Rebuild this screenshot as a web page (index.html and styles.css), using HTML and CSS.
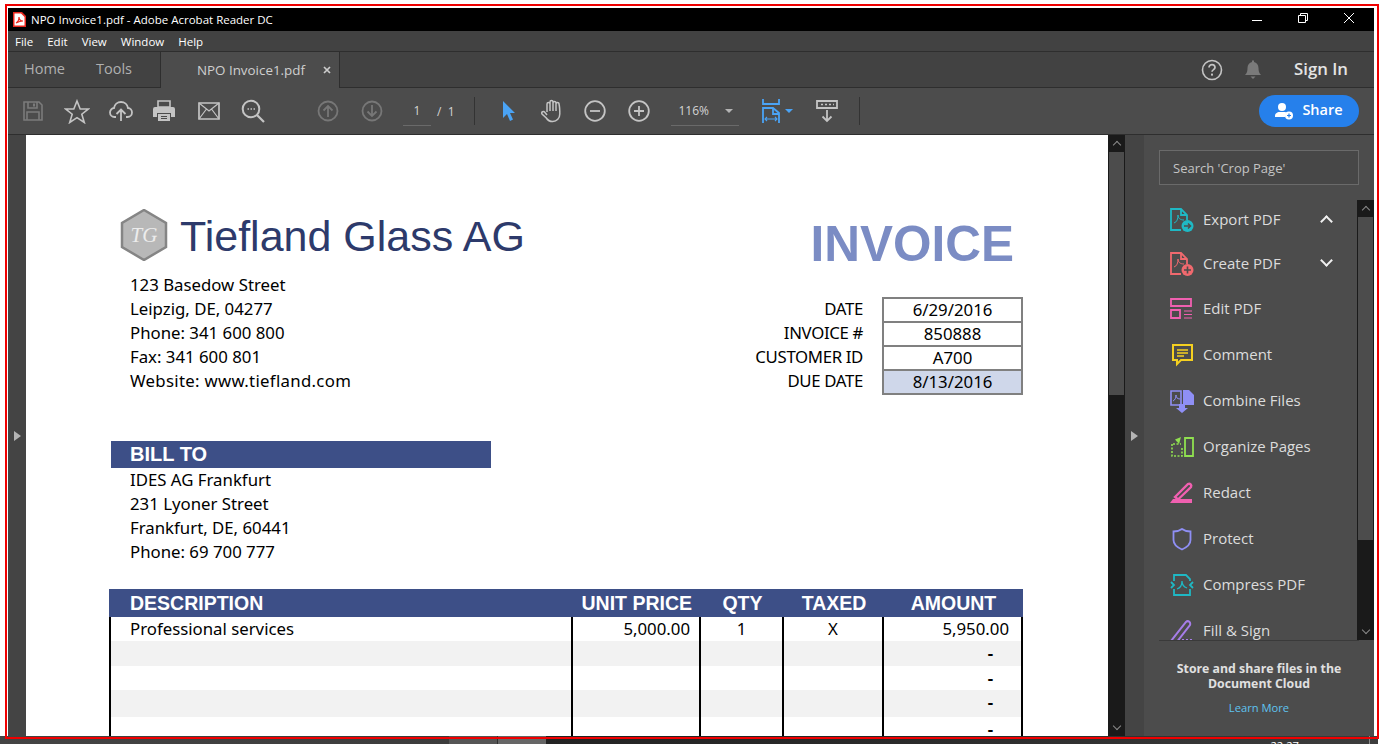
FILE: index.html
```html
<!DOCTYPE html>
<html lang="en">
<head>
    <meta charset="UTF-8">
    <meta name="viewport" content="width=device-width, initial-scale=1.0">
    <title>NPO Invoice1.pdf - Adobe Acrobat Reader DC</title>
    <link rel="stylesheet" href="styles.css">
</head>
<body>
    <div class="screen">
        <div class="app">
            <div class="titlebar">
                <svg class="pdf-icon" width="14" height="15" viewBox="0 0 14 15"><path d="M1 0h9l4 4v11H1z" fill="#e8281e"/><path d="M2.500 1.500h6.500l3.500 3.500v8.500h-10z" fill="#fff"/><path d="M4 11c2-1 3-3 3-6 0 3 1 4 4 4-3 0-5 1-7 2z" fill="none" stroke="#e8281e" stroke-width="1.200"/></svg>
                <span class="title-text">NPO Invoice1.pdf - Adobe Acrobat Reader DC</span>
                <div class="win-btns">
                    <svg width="12" height="12" viewBox="0 0 12 12"><path d="M1 8.500h10" stroke="#fff"/></svg>
                    <svg width="12" height="12" viewBox="0 0 12 12"><path d="M1.500 3.500h7v7h-7zM3.500 3.500v-2h7v7h-2" fill="none" stroke="#fff"/></svg>
                    <svg width="12" height="12" viewBox="0 0 12 12"><path d="M1 1l10 10M11 1L1 11" stroke="#fff"/></svg>
                </div>
            </div>
            <div class="menubar">
                <span>File</span><span>Edit</span><span>View</span><span>Window</span><span>Help</span>
            </div>
            <div class="tabbar">
                <span class="tab-link tab-home">Home</span>
                <span class="tab-link tab-tools">Tools</span>
                <div class="doc-tab">
                    <span>NPO Invoice1.pdf</span>
                    <svg width="8" height="8" viewBox="0 0 8 8"><path d="M1 1l6 6M7 1L1 7" stroke="#ccc" stroke-width="1.700"/></svg>
                </div>
                <div class="tab-right">
                    <svg width="22" height="22" viewBox="0 0 22 22"><circle cx="11" cy="11" r="9.500" fill="none" stroke="#c4c4c4" stroke-width="1.600"/><path d="M8 8.600c0-4 6-4 6 0 0 2-3 2-3 4.200" fill="none" stroke="#c4c4c4" stroke-width="1.700"/><rect x="10" y="14.600" width="2" height="2" fill="#c4c4c4"/></svg>
                    <svg class="bell" width="18" height="21" viewBox="0 0 18 21"><path d="M1 16c2-2 2.500-4 2.500-7S5.500 3.500 8 3V1.500h2V3c2.500.5 4.500 3 4.500 6s.5 5 2.500 7z" fill="#7a7a7a"/><path d="M6.500 17.500h5L9 20z" fill="#7a7a7a"/></svg>
                    <span class="sign-in">Sign In</span>
                </div>
            </div>
            <div class="toolbar">
                <svg class="tb tb-save" width="22" height="22" viewBox="0 0 22 22"><path d="M2 2h15l3 3v15H2z" fill="none" stroke="#7b7b7b" stroke-width="1.600"/><path d="M6 2v6h9V2M5 20v-8h12v8" fill="none" stroke="#7b7b7b" stroke-width="1.600"/><rect x="11" y="3.500" width="2" height="3" fill="#7b7b7b"/></svg>
                <svg class="tb tb-star" width="26" height="25" viewBox="0 0 26 25"><path d="M13 2l3.200 8h8.300l-6.700 5.200 2.500 8.300L13 18.600 5.700 23.500l2.500-8.300L1.500 10h8.300z" fill="none" stroke="#c4c4c4" stroke-width="1.600"/></svg>
                <svg class="tb tb-cloud" width="24" height="22" viewBox="0 0 24 22"><path d="M7 17H5.500C3 17 1 15 1 12.500S3 8 5 8c.5-3.500 3.500-6 7-6s6.500 2.500 7 6c2.200 0 4 2 4 4.500S21 17 18.500 17H17" fill="none" stroke="#c4c4c4" stroke-width="1.800"/><path d="M12 21V10M7.500 14L12 9.500l4.500 4.500" fill="none" stroke="#c4c4c4" stroke-width="1.800"/></svg>
                <svg class="tb tb-print" width="22" height="22" viewBox="0 0 22 22"><path d="M5 1h12v6H5z" fill="none" stroke="#c4c4c4" stroke-width="1.600"/><path d="M2 7h18a2 2 0 0 1 2 2v8h-4v-4H4v4H0V9a2 2 0 0 1 2-2z" fill="#c4c4c4"/><path d="M5 14h12v7H5z" fill="#c4c4c4"/><path d="M8 16.500h6M8 18.500h6" stroke="#4c4c4c"/></svg>
                <svg class="tb tb-mail" width="22" height="18" viewBox="0 0 22 18"><path d="M1 1h20v16H1z" fill="none" stroke="#c4c4c4" stroke-width="1.700"/><path d="M1 1l10 8 10-8M1 17l7.500-10M21 17L13.500 7" fill="none" stroke="#c4c4c4" stroke-width="1.200"/></svg>
                <svg class="tb tb-find" width="24" height="24" viewBox="0 0 24 24"><circle cx="10" cy="10" r="8.300" fill="none" stroke="#c4c4c4" stroke-width="2"/><path d="M16 16l7 7" stroke="#c4c4c4" stroke-width="2.200"/><path d="M6.500 10h1.500M9.500 10h1.500M12.500 10H14" stroke="#c4c4c4" stroke-width="1.500"/></svg>
                <svg class="tb tb-up" width="22" height="22" viewBox="0 0 22 22"><circle cx="11" cy="11" r="9.500" fill="none" stroke="#777" stroke-width="1.800"/><path d="M11 17V6M6.500 10.500L11 6l4.500 4.500" fill="none" stroke="#777" stroke-width="1.800"/></svg>
                <svg class="tb tb-down" width="22" height="22" viewBox="0 0 22 22"><circle cx="11" cy="11" r="9.500" fill="none" stroke="#777" stroke-width="1.800"/><path d="M11 5v11M6.500 11.500L11 16l4.500-4.500" fill="none" stroke="#777" stroke-width="1.800"/></svg>
                <div class="page-box">1</div>
                <span class="page-total">/ &nbsp;1</span>
                <div class="tb-sep sep-a"></div>
                <svg class="tb tb-arrow" width="14" height="22" viewBox="0 0 14 22"><path d="M1 1v17l4-4 3 7 3-1.500-3-6.500h5z" fill="#4aa3f5"/></svg>
                <svg class="tb tb-hand" width="22" height="24" viewBox="0 0 22 24"><path d="M6 13V5a1.500 1.500 0 0 1 3 0V3a1.500 1.500 0 0 1 3 0v1a1.500 1.500 0 0 1 3 0v1a1.500 1.500 0 0 1 3 0c.8 3 .8 7 .8 10 0 4-3 7.500-7 7.500-3 0-5-1-6.500-3.500L1 15c-1-2 1.500-3.500 3-1.500l2 2.500M9 4v8M12 3v9M15 4v8" fill="none" stroke="#c4c4c4" stroke-width="1.500"/></svg>
                <svg class="tb tb-minus" width="22" height="22" viewBox="0 0 22 22"><circle cx="11" cy="11" r="9.800" fill="none" stroke="#c4c4c4" stroke-width="1.800"/><path d="M6 11h10" stroke="#c4c4c4" stroke-width="1.800"/></svg>
                <svg class="tb tb-plus" width="22" height="22" viewBox="0 0 22 22"><circle cx="11" cy="11" r="9.800" fill="none" stroke="#c4c4c4" stroke-width="1.800"/><path d="M6 11h10M11 6v10" stroke="#c4c4c4" stroke-width="1.800"/></svg>
                <div class="zoom-box"><span>116%</span><i class="caret"></i></div>
                <svg class="tb tb-fit" width="18" height="24" viewBox="0 0 18 24"><path d="M1 0v5h16V0" fill="none" stroke="#4aa3f5" stroke-width="1.800"/><path d="M1 24V9h10l6 5v10M11 9v6h6" fill="none" stroke="#4aa3f5" stroke-width="1.800"/><path d="M3 20h12M5 18l-2 2 2 2M13 18l2 2-2 2" fill="none" stroke="#4aa3f5" stroke-width="1.100"/></svg>
                <i class="caret caret-blue"></i>
                <svg class="tb tb-scroll" width="22" height="23" viewBox="0 0 22 23"><path d="M1 1h20v7H1z" fill="none" stroke="#c4c4c4" stroke-width="1.800"/><path d="M5 4.500h2M9 4.500h2M13 4.500h2M17 4.500h1" stroke="#c4c4c4" stroke-width="1.500"/><path d="M11 10v11M6.500 16.500L11 21l4.500-4.500" fill="none" stroke="#c4c4c4" stroke-width="1.800"/></svg>
                <div class="tb-sep sep-b"></div>
                <div class="share-btn">
                    <svg width="19" height="18" viewBox="0 0 19 18"><circle cx="7" cy="5" r="4" fill="#fff"/><path d="M0 14c0-3 3-4 4-4h6c1 0 2 .5 3 1.500-2 1-3 2.500-3 3.500H0z" fill="#fff"/><circle cx="14" cy="13.500" r="4" fill="#fff"/><path d="M12 13.500h4M14 11.500v4" stroke="#2680eb" stroke-width="1.200"/></svg>
                    <span>Share</span>
                </div>
            </div>
            <div class="workspace">
                <div class="left-strip"><i class="tri"></i></div>
                <div class="page">
                    <div class="inv-head">
                        <div class="logo-row">
                            <svg class="logo" width="48" height="52" viewBox="0 0 48 52"><path d="M24 1l22 13v24L24 51 2 38V14z" fill="#b8b8b8" stroke="#858585" stroke-width="2.500"/><text x="24" y="33" text-anchor="middle" class="logo-text">TG</text></svg>
                            <span class="company">Tiefland Glass AG</span>
                        </div>
                        <div class="invoice-word">INVOICE</div>
                    </div>
                    <div class="addr-row">
                        <div class="addr">
                            <div>123 Basedow Street</div>
                            <div>Leipzig, DE, 04277</div>
                            <div>Phone: 341 600 800</div>
                            <div>Fax: 341 600 801</div>
                            <div class="addr-web">Website: www.tiefland.com</div>
                        </div>
                        <div class="meta">
                            <div class="meta-labels">
                                <div>DATE</div><div>INVOICE #</div><div>CUSTOMER ID</div><div>DUE DATE</div>
                            </div>
                            <div class="meta-vals">
                                <div>6/29/2016</div><div>850888</div><div>A700</div><div class="due">8/13/2016</div>
                            </div>
                        </div>
                    </div>
                    <div class="bill-head">BILL TO</div>
                    <div class="bill-lines">
                        <div>IDES AG Frankfurt</div>
                        <div>231 Lyoner Street</div>
                        <div>Frankfurt, DE, 60441</div>
                        <div>Phone: 69 700 777</div>
                    </div>
                    <div class="items">
                        <div class="item-row item-head">
                            <div class="c-desc">DESCRIPTION</div><div class="c-price">UNIT PRICE</div><div class="c-qty">QTY</div><div class="c-tax">TAXED</div><div class="c-amt">AMOUNT</div>
                        </div>
                        <div class="item-row r1">
                            <div class="c-desc">Professional services</div><div class="c-price">5,000.00</div><div class="c-qty">1</div><div class="c-tax">X</div><div class="c-amt">5,950.00</div>
                        </div>
                        <div class="item-row r2 alt">
                            <div class="c-desc"></div><div class="c-price"></div><div class="c-qty"></div><div class="c-tax"></div><div class="c-amt dash">-</div>
                        </div>
                        <div class="item-row r3">
                            <div class="c-desc"></div><div class="c-price"></div><div class="c-qty"></div><div class="c-tax"></div><div class="c-amt dash">-</div>
                        </div>
                        <div class="item-row r4 alt">
                            <div class="c-desc"></div><div class="c-price"></div><div class="c-qty"></div><div class="c-tax"></div><div class="c-amt dash">-</div>
                        </div>
                        <div class="item-row r5">
                            <div class="c-desc"></div><div class="c-price"></div><div class="c-qty"></div><div class="c-tax"></div><div class="c-amt dash">-</div>
                        </div>
                    </div>
                </div>
                <div class="scroll main-scroll">
                    <div class="scroll-btn"><i class="chev chev-up"></i></div>
                    <div class="thumb"></div>
                    <div class="scroll-gap"></div>
                    <div class="scroll-btn"><i class="chev chev-down"></i></div>
                </div>
                <div class="gutter"><i class="tri"></i></div>
                <div class="panel">
                    <div class="search">Search 'Crop Page'</div>
                    <div class="tools-wrap">
                        <div class="tools-list">
                            <div class="tool tool-export">
                                <svg width="24" height="24" viewBox="0 0 24 24"><path d="M11 22H1V1h10l6 6v5M11 1v6h6" fill="none" stroke="#1fb8c4" stroke-width="1.800"/><path d="M4 15c3-1 4-4 4-8 0 3 2 5 6 5" fill="none" stroke="#1fb8c4" stroke-width="1"/><circle cx="17.500" cy="18" r="6" fill="#1fb8c4"/><path d="M14 18h6M18 15.500l2.500 2.500-2.500 2.500" fill="none" stroke="#4c4c4c" stroke-width="1.500"/></svg>
                                <span>Export PDF</span>
                                <i class="tool-chev tool-chev-up"></i>
                            </div>
                            <div class="tool tool-create">
                                <svg width="24" height="24" viewBox="0 0 24 24"><path d="M11 22H1V1h10l6 6v5M11 1v6h6" fill="none" stroke="#f0696e" stroke-width="1.800"/><path d="M4 15c3-1 4-4 4-8 0 3 2 5 6 5" fill="none" stroke="#f0696e" stroke-width="1"/><circle cx="17.500" cy="18" r="6" fill="#f0696e"/><path d="M14 18h7M17.500 14.500v7" fill="none" stroke="#4c4c4c" stroke-width="1.600"/></svg>
                                <span>Create PDF</span>
                                <i class="tool-chev tool-chev-down"></i>
                            </div>
                            <div class="tool tool-edit">
                                <svg width="24" height="24" viewBox="0 0 24 24"><path d="M1 2h20v7H1zM1 13h9v8H1z" fill="none" stroke="#f060b0" stroke-width="1.800"/><path d="M14 14h8M14 17.500h8M14 21h8" stroke="#f060b0"/></svg>
                                <span>Edit PDF</span>
                            </div>
                            <div class="tool">
                                <svg width="24" height="24" viewBox="0 0 24 24"><path d="M3 2h19v15H11l-4 4v-4H3z" fill="none" stroke="#f5d020" stroke-width="2"/><path d="M7 7h11M7 10h11M7 13h7" stroke="#f5d020" stroke-width="1.400"/></svg>
                                <span>Comment</span>
                            </div>
                            <div class="tool">
                                <svg width="24" height="24" viewBox="0 0 24 24"><path d="M1 2h10v14H1z" fill="none" stroke="#8f8ff5" stroke-width="1.600"/><path d="M3 12c2-1 3-3 3-6 0 2 1 4 4 4" fill="none" stroke="#8f8ff5"/><path d="M13 1h6l5 5v10H13z" fill="#8f8ff5"/><path d="M9 15h6v4h3l-6 5-6-5h3z" fill="#8f8ff5"/></svg>
                                <span>Combine Files</span>
                            </div>
                            <div class="tool">
                                <svg width="24" height="24" viewBox="0 0 24 24"><path d="M15 3h8v18h-8z" fill="none" stroke="#90e050" stroke-width="1.800"/><path d="M3 9h8M2 9v12h10V12" fill="none" stroke="#90e050" stroke-width="1.600" stroke-dasharray="2 1.500"/><path d="M11 2L5 4.500 9 9z" fill="#90e050"/></svg>
                                <span>Organize Pages</span>
                            </div>
                            <div class="tool">
                                <svg width="24" height="24" viewBox="0 0 24 24"><path d="M0 22l3-4h19v4z" fill="#f060b0"/><path d="M5 16L18 3c2-1 4 1 3 3L8 18.500z" fill="none" stroke="#f060b0" stroke-width="2.400"/></svg>
                                <span>Redact</span>
                            </div>
                            <div class="tool">
                                <svg width="24" height="24" viewBox="0 0 24 24"><path d="M12 2c2 1.500 5 2.500 8.500 2.500V13c0 4-4 7.500-8.500 9.500C7.500 20.500 3.500 17 3.500 13V4.500C7 4.500 10 3.500 12 2z" fill="none" stroke="#8f8ff5" stroke-width="1.800"/></svg>
                                <span>Protect</span>
                            </div>
                            <div class="tool">
                                <svg width="24" height="24" viewBox="0 0 24 24"><path d="M4 8V2h12l4 4v2M4 16v6h16v-6" fill="none" stroke="#1fb8c4" stroke-width="1.800"/><path d="M1 9l3 3-3 3M23 9l-3 3 3 3" fill="none" stroke="#1fb8c4" stroke-width="1.800"/><path d="M7 16c3-1 5-4 5-8 0 3 2 6 5 7" fill="none" stroke="#1fb8c4" stroke-width="1.300"/></svg>
                                <span>Compress PDF</span>
                            </div>
                            <div class="tool">
                                <svg width="24" height="24" viewBox="0 0 24 24"><path d="M1 22L16 3c2-2 5 0 4 3L6 24M9 24V20M13 24v-4M17 24v-4M21 24v-4" fill="none" stroke="#a67de8" stroke-width="2"/></svg>
                                <span>Fill &amp; Sign</span>
                            </div>
                        </div>
                        <div class="scroll panel-scroll">
                            <div class="scroll-btn"><i class="chev chev-up"></i></div>
                            <div class="thumb"></div>
                            <div class="scroll-gap"></div>
                            <div class="scroll-btn"><i class="chev chev-down"></i></div>
                        </div>
                    </div>
                    <div class="promo">
                        <p class="promo-text">Store and share files in the<br>Document Cloud</p>
                        <span class="promo-link">Learn More</span>
                    </div>
                </div>
            </div>
        </div>
        <div class="taskbar">
            <div class="task-slot"></div>
            <div class="task-slot task-slot-active"></div>
            <span class="clock">22:27</span>
            <div class="task-line"></div>
        </div>
        <div class="red-frame"></div>
    </div>
</body>
</html>
```

FILE: styles.css
```css
html, body {
    margin: 0;
    padding: 0;
    background-color: #ffffff;
}

.screen {
    position: relative;
    width: 1382px;
    height: 744px;
    overflow: hidden;
    display: flex;
    flex-direction: column;
    font-family: "Open Sans", "Noto Sans", sans-serif;
}

.red-frame {
    position: absolute;
    left: 5px;
    top: 4px;
    width: 1370px;
    height: 731px;
    border: 2px solid #f00000;
    pointer-events: none;
}

.app {
    margin: 8px 8px 0 8px;
    height: 728px;
    flex: none;
    display: flex;
    flex-direction: column;
    background-color: #424242;
}

.titlebar {
    height: 23px;
    flex: none;
    background-color: #000000;
    display: flex;
    align-items: center;
    padding-left: 4px;
    color: #ffffff;
    font-size: 11.5px;
}

.title-text {
    margin-left: 5px;
}

.win-btns {
    margin-left: auto;
    display: flex;
    gap: 34px;
    padding-right: 19px;
    margin-top: -3px;
}

.menubar {
    height: 20px;
    flex: none;
    display: flex;
    align-items: center;
    padding-left: 7px;
    gap: 14px;
    font-size: 11.5px;
    color: #ffffff;
    border-bottom: 1px solid #2e2e2e;
}

.tabbar {
    height: 35px;
    flex: none;
    display: flex;
    align-items: center;
    background-color: #424242;
    border-bottom: 1px solid #2e2e2e;
    color: #b0b0b0;
    font-size: 14.5px;
}

.tab-link {
    margin-top: -2px;
}

.tab-home {
    margin-left: 16px;
}

.tab-tools {
    margin-left: 31px;
}

.doc-tab {
    margin-left: 28px;
    width: 180px;
    height: 36px;
    box-sizing: border-box;
    margin-bottom: -1px;
    background-color: #4c4c4c;
    border-left: 1px solid #2e2e2e;
    border-right: 1px solid #2e2e2e;
    display: flex;
    align-items: center;
    justify-content: flex-end;
    gap: 18px;
    padding-right: 8px;
    font-size: 13.4px;
    color: #cfcfcf;
}

.tab-right {
    margin-left: auto;
    display: flex;
    align-items: center;
    padding-right: 26px;
}

.bell {
    margin-left: 21px;
}

.sign-in {
    margin-left: 32px;
    font-size: 16.8px;
    font-weight: 600;
    color: #e4e4e4;
    margin-top: -2px;
}

.toolbar {
    height: 46px;
    flex: none;
    display: flex;
    align-items: center;
    background-color: #4c4c4c;
    border-bottom: 1px solid #2e2e2e;
}

.tb {
    flex: none;
}

.tb-save { margin-left: 14px; }
.tb-star { margin-left: 20px; }
.tb-cloud { margin-left: 19px; }
.tb-print { margin-left: 20px; }
.tb-mail { margin-left: 23px; }
.tb-find { margin-left: 21px; }
.tb-up { margin-left: 52px; }
.tb-down { margin-left: 22px; }

.page-box {
    margin-left: 20px;
    width: 28px;
    height: 30px;
    box-sizing: border-box;
    border-bottom: 1px solid #6a6a6a;
    text-align: center;
    line-height: 30px;
    font-size: 12px;
    color: #d4d4d4;
}

.page-total {
    margin-left: 6px;
    font-size: 12px;
    color: #d4d4d4;
}

.tb-sep {
    width: 1px;
    height: 28px;
    background-color: #333333;
    flex: none;
}

.sep-a { margin-left: 19px; }
.tb-arrow { margin-left: 27px; }
.tb-hand { margin-left: 25px; }
.tb-minus { margin-left: 21px; }
.tb-plus { margin-left: 22px; }

.zoom-box {
    margin-left: 21px;
    width: 68px;
    height: 30px;
    box-sizing: border-box;
    border-bottom: 1px solid #6a6a6a;
    display: flex;
    align-items: center;
    padding-left: 8px;
    font-size: 12px;
    color: #d4d4d4;
}

.caret {
    display: block;
    width: 0;
    height: 0;
    border-left: 4px solid transparent;
    border-right: 4px solid transparent;
    border-top: 4px solid #b4b4b4;
    margin-left: 16px;
}

.tb-fit { margin-left: 23px; }

.caret-blue {
    border-top-color: #4aa3f5;
    margin-left: 5px;
}

.tb-scroll { margin-left: 23px; }
.sep-b { margin-left: 21px; }

.share-btn {
    margin-left: auto;
    margin-right: 15px;
    width: 100px;
    height: 32px;
    border-radius: 16px;
    background-color: #2680eb;
    display: flex;
    align-items: center;
    justify-content: center;
    gap: 8px;
    color: #ffffff;
    font-size: 14.5px;
    font-weight: 600;
}

.share-btn span {
    margin-top: -3px;
}

.workspace {
    flex: 1;
    min-height: 0;
    display: flex;
}

.left-strip {
    width: 18px;
    flex: none;
    background-color: #444444;
    display: flex;
    align-items: center;
    justify-content: center;
}

.tri {
    display: block;
    width: 0;
    height: 0;
    border-top: 5px solid transparent;
    border-bottom: 5px solid transparent;
    border-left: 7px solid #b4b4b4;
}

.page {
    width: 1082px;
    flex: none;
    background-color: #ffffff;
    overflow: hidden;
    color: #000000;
    font-family: "Noto Sans", "Open Sans", sans-serif;
    font-size: 16.8px;
}

.inv-head {
    display: flex;
    justify-content: space-between;
    padding: 74px 94px 0 94px;
    height: 64px;
}

.logo-row {
    display: flex;
    align-items: flex-start;
    gap: 12px;
}

.logo-text {
    font-family: "Liberation Serif", serif;
    font-style: italic;
    font-size: 21px;
    fill: #ececec;
}

.company {
    font-family: "Liberation Sans", Arial, sans-serif;
    font-size: 43px;
    line-height: 52px;
    color: #2d3a6b;
    margin-top: 1px;
}

.invoice-word {
    font-family: "Liberation Sans", Arial, sans-serif;
    font-weight: 700;
    font-size: 49.5px;
    line-height: 58px;
    color: #7b8cc4;
    margin-top: 6px;
}

.addr-row {
    display: flex;
    justify-content: space-between;
    padding: 0 85px 0 104px;
    height: 168px;
}

.addr div,
.bill-lines div {
    height: 24px;
    line-height: 24px;
}

.addr .addr-web {
    letter-spacing: 0.3px;
}

.meta {
    display: flex;
    margin-top: 24px;
    height: 98px;
}

.meta-labels {
    text-align: right;
    width: 200px;
    padding-right: 18px;
    box-sizing: border-box;
    margin-right: 1px;
    letter-spacing: -0.35px;
}

.meta-labels div {
    height: 24px;
    line-height: 24px;
}

.meta-vals {
    width: 141px;
    box-sizing: border-box;
    border: 2px solid #808080;
    text-align: center;
}

.meta-vals div {
    height: 24px;
    line-height: 22px;
    box-sizing: border-box;
    border-bottom: 2px solid #808080;
}

.meta-vals .due {
    height: 22px;
    border-bottom: none;
    background-color: #cfd7ea;
}

.bill-head {
    margin-left: 85px;
    width: 380px;
    height: 27px;
    box-sizing: border-box;
    padding-left: 19px;
    background-color: #3d4f87;
    color: #ffffff;
    font-family: "Liberation Sans", Arial, sans-serif;
    font-weight: 700;
    font-size: 20px;
    line-height: 27px;
}

.bill-lines {
    padding-left: 104px;
    height: 121px;
}

.items {
    margin-left: 83px;
    width: 914px;
}

.item-row {
    display: grid;
    grid-template-columns: 464px 128px 83px 100px 139px;
}

.item-row > div {
    box-sizing: border-box;
    border-right: 2px solid #000000;
    line-height: 24px;
}

.item-row .c-desc {
    border-left: 2px solid #000000;
    padding-left: 19px;
}

.item-row .c-price {
    text-align: right;
    padding-right: 9px;
}

.item-row .c-qty,
.item-row .c-tax {
    text-align: center;
}

.item-row .c-amt {
    text-align: right;
    padding-right: 12px;
}

.item-row .dash {
    padding-right: 28px;
    font-weight: 700;
}

.item-head {
    background-color: #3d4f87;
    color: #ffffff;
    height: 28px;
    font-family: "Liberation Sans", Arial, sans-serif;
    font-weight: 700;
    font-size: 19.5px;
}

.item-head > div {
    border: none !important;
    line-height: 28px !important;
}

.item-head .c-desc {
    padding-left: 21px;
}

.item-head .c-price {
    padding-right: 9px;
}

.item-head .c-amt {
    text-align: center;
    padding-right: 0;
}

.r1 { height: 24px; }
.r2 { height: 25px; }
.r3 { height: 24px; }
.r4 { height: 27px; }
.r5 { height: 24px; }

.alt > div {
    background-color: #f2f2f2;
}

.scroll {
    width: 17px;
    flex: none;
    display: flex;
    flex-direction: column;
    background-color: #1a1a1a;
}

.main-scroll .thumb {
    height: 243px;
    background-color: #4c4c4c;
    margin: 0 1px;
}

.scroll-btn {
    height: 17px;
    flex: none;
    display: flex;
    align-items: center;
    justify-content: center;
}

.scroll-gap {
    flex: 1;
}

.chev {
    display: block;
    width: 5px;
    height: 5px;
    border-left: 1.5px solid #8a8a8a;
    border-bottom: 1.5px solid #8a8a8a;
}

.chev-up {
    transform: rotate(135deg);
    margin-top: 3px;
}

.chev-down {
    transform: rotate(-45deg);
    margin-top: -3px;
}

.gutter {
    width: 19px;
    flex: none;
    background-color: #444444;
    display: flex;
    align-items: center;
    justify-content: center;
}

.panel {
    flex: 1;
    background-color: #4c4c4c;
    display: flex;
    flex-direction: column;
    min-width: 0;
}

.search {
    margin: 15px;
    width: 200px;
    height: 35px;
    box-sizing: border-box;
    border: 1px solid #6a6a6a;
    background-color: #474747;
    padding-left: 13px;
    line-height: 34px;
    font-size: 13px;
    color: #c4c4c4;
    flex: none;
}

.tools-wrap {
    height: 440px;
    flex: none;
    display: flex;
    overflow: hidden;
}

.tools-list {
    flex: 1;
    padding-left: 26px;
    overflow: hidden;
}

.tool {
    height: 46px;
    display: flex;
    align-items: center;
    color: #dcdcdc;
    font-size: 15px;
    position: relative;
}

.tool-export {
    margin-top: -3px;
}

.tool-create {
    margin-top: -2px;
}

.tool-edit {
    margin-top: -1px;
}

.tool svg {
    flex: none;
    margin-right: 9px;
}

.tool span {
    margin-top: -2px;
}

.tool-chev {
    display: block;
    width: 7px;
    height: 7px;
    border-left: 2.5px solid #f0f0f0;
    border-bottom: 2.5px solid #f0f0f0;
    position: absolute;
    left: 152px;
}

.tool-chev-up {
    transform: rotate(135deg);
    top: 20px;
}

.tool-chev-down {
    transform: rotate(-45deg);
    top: 15px;
}

.panel-scroll .thumb {
    height: 323px;
    background-color: #4c4c4c;
    margin: 0 1px;
}

.promo {
    flex: 1;
    margin: 0 15px;
    border-top: 1px solid #3a3a3a;
    text-align: center;
    padding-top: 20px;
    background-color: #4c4c4c;
}

.promo-text {
    margin: 0;
    font-size: 12.3px;
    font-weight: 700;
    line-height: 15px;
    color: #e0e0e0;
}

.promo-link {
    display: block;
    margin-top: 9px;
    font-size: 11.2px;
    color: #5fc3f0;
}

.taskbar {
    flex: 1;
    width: 1378px;
    display: flex;
    background: linear-gradient(to right, #444444 0, #3c3c3c 449px, #232323 546px, #2a2a2a 900px, #3c3c3c 100%);
}

.task-slot {
    width: 48px;
    margin-right: 1px;
    background-color: #555555;
}

.task-slot:first-child {
    margin-left: 449px;
}

.task-slot-active {
    background-color: #666666;
}

.clock {
    margin-left: auto;
    margin-right: 70px;
    margin-top: 3px;
    font-size: 11.2px;
    color: #ffffff;
    line-height: 14px;
}

.task-line {
    width: 1px;
    margin-right: 8px;
    background-color: #8a8a8a;
}
```
